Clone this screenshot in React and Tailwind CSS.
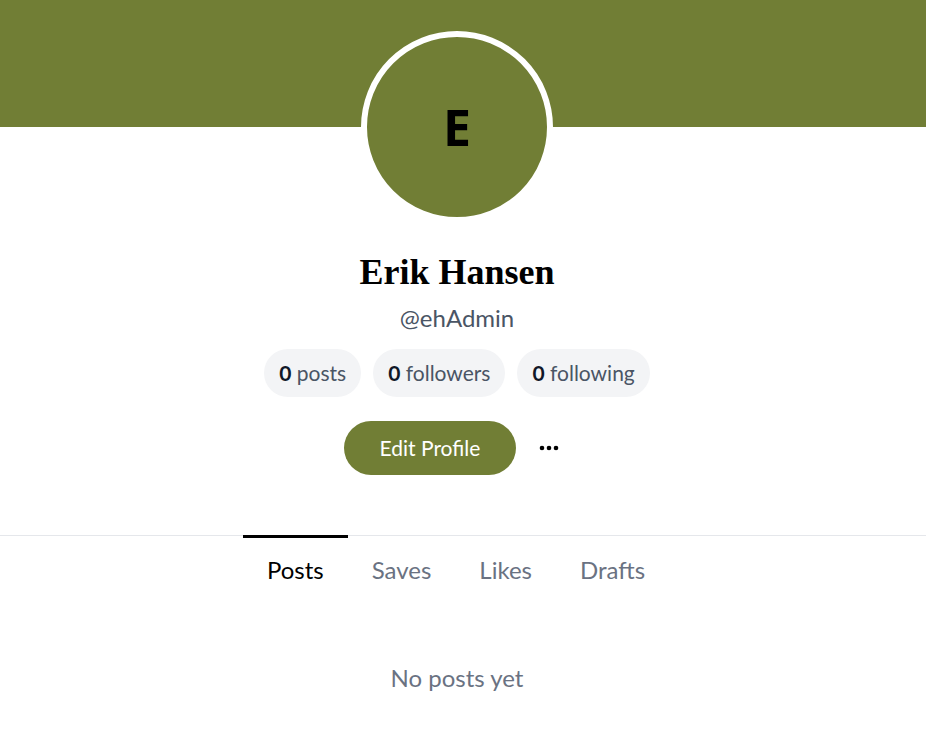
import React from 'react'

const stats = [
  { n: 0, label: 'posts' },
  { n: 0, label: 'followers' },
  { n: 0, label: 'following' },
]

const tabs = ['Posts', 'Saves', 'Likes', 'Drafts']

const App = () => {
  return (
    <div className="min-h-screen bg-white font-['Lato',sans-serif]">
      {/* banner */}
      <div className="h-[127px] bg-[#717e35]"></div>

      <div className="flex flex-col items-center pr-3">
        <div className="-mt-[96px] w-[192px] h-[192px] rounded-full border-[6px] border-white bg-[#717e35] flex items-center justify-center">
          <span className="font-['Open_Sans',sans-serif] font-bold text-[50px] leading-none text-black">E</span>
        </div>

        <h1 className="mt-[29px] font-['Liberation_Serif',serif] font-bold text-[36px] leading-[40px] text-black">Erik Hansen</h1>
        <p className="mt-[12px] text-[24px] leading-[28px] text-gray-600">@ehAdmin</p>

        <div className="mt-[17px] flex gap-3">
          {stats.map(s => (
            <div key={s.label} className="rounded-full bg-gray-100 px-[15px] py-2.5 text-[21px] leading-7 text-gray-600">
              <span className="font-bold text-gray-900">{s.n}</span> {s.label}
            </div>
          ))}
        </div>

        <div className="mt-6 flex items-center gap-3">
          <button className="rounded-full bg-[#717e35] px-9 py-[13px] text-[21px] leading-7 text-white">Edit Profile</button>
          <div className="w-[42px] h-[42px] flex items-center justify-center">
            <svg width="20" height="6" viewBox="0 0 20 6">
              <circle cx="3" cy="3" r="2.3" fill="black" />
              <circle cx="10" cy="3" r="2.3" fill="black" />
              <circle cx="17" cy="3" r="2.3" fill="black" />
            </svg>
          </div>
        </div>
      </div>

      <div className="mt-[60px] border-t border-gray-200">
        <div className="flex justify-center pr-[14px]">
          {tabs.map((t, i) => (
            <div
              key={t}
              className={
                i === 0
                  ? 'px-6 pt-[16px] pb-4 text-2xl leading-8 text-black border-t-[3px] border-black -mt-px'
                  : 'px-6 pt-[16px] pb-4 text-2xl leading-8 text-gray-500 border-t-[3px] border-transparent -mt-px'
              }
            >
              {t}
            </div>
          ))}
        </div>
        <p className="mt-[60px] pr-3 text-center text-2xl leading-8 text-gray-500">No posts yet</p>
      </div>
    </div>
  )
}

export default App
